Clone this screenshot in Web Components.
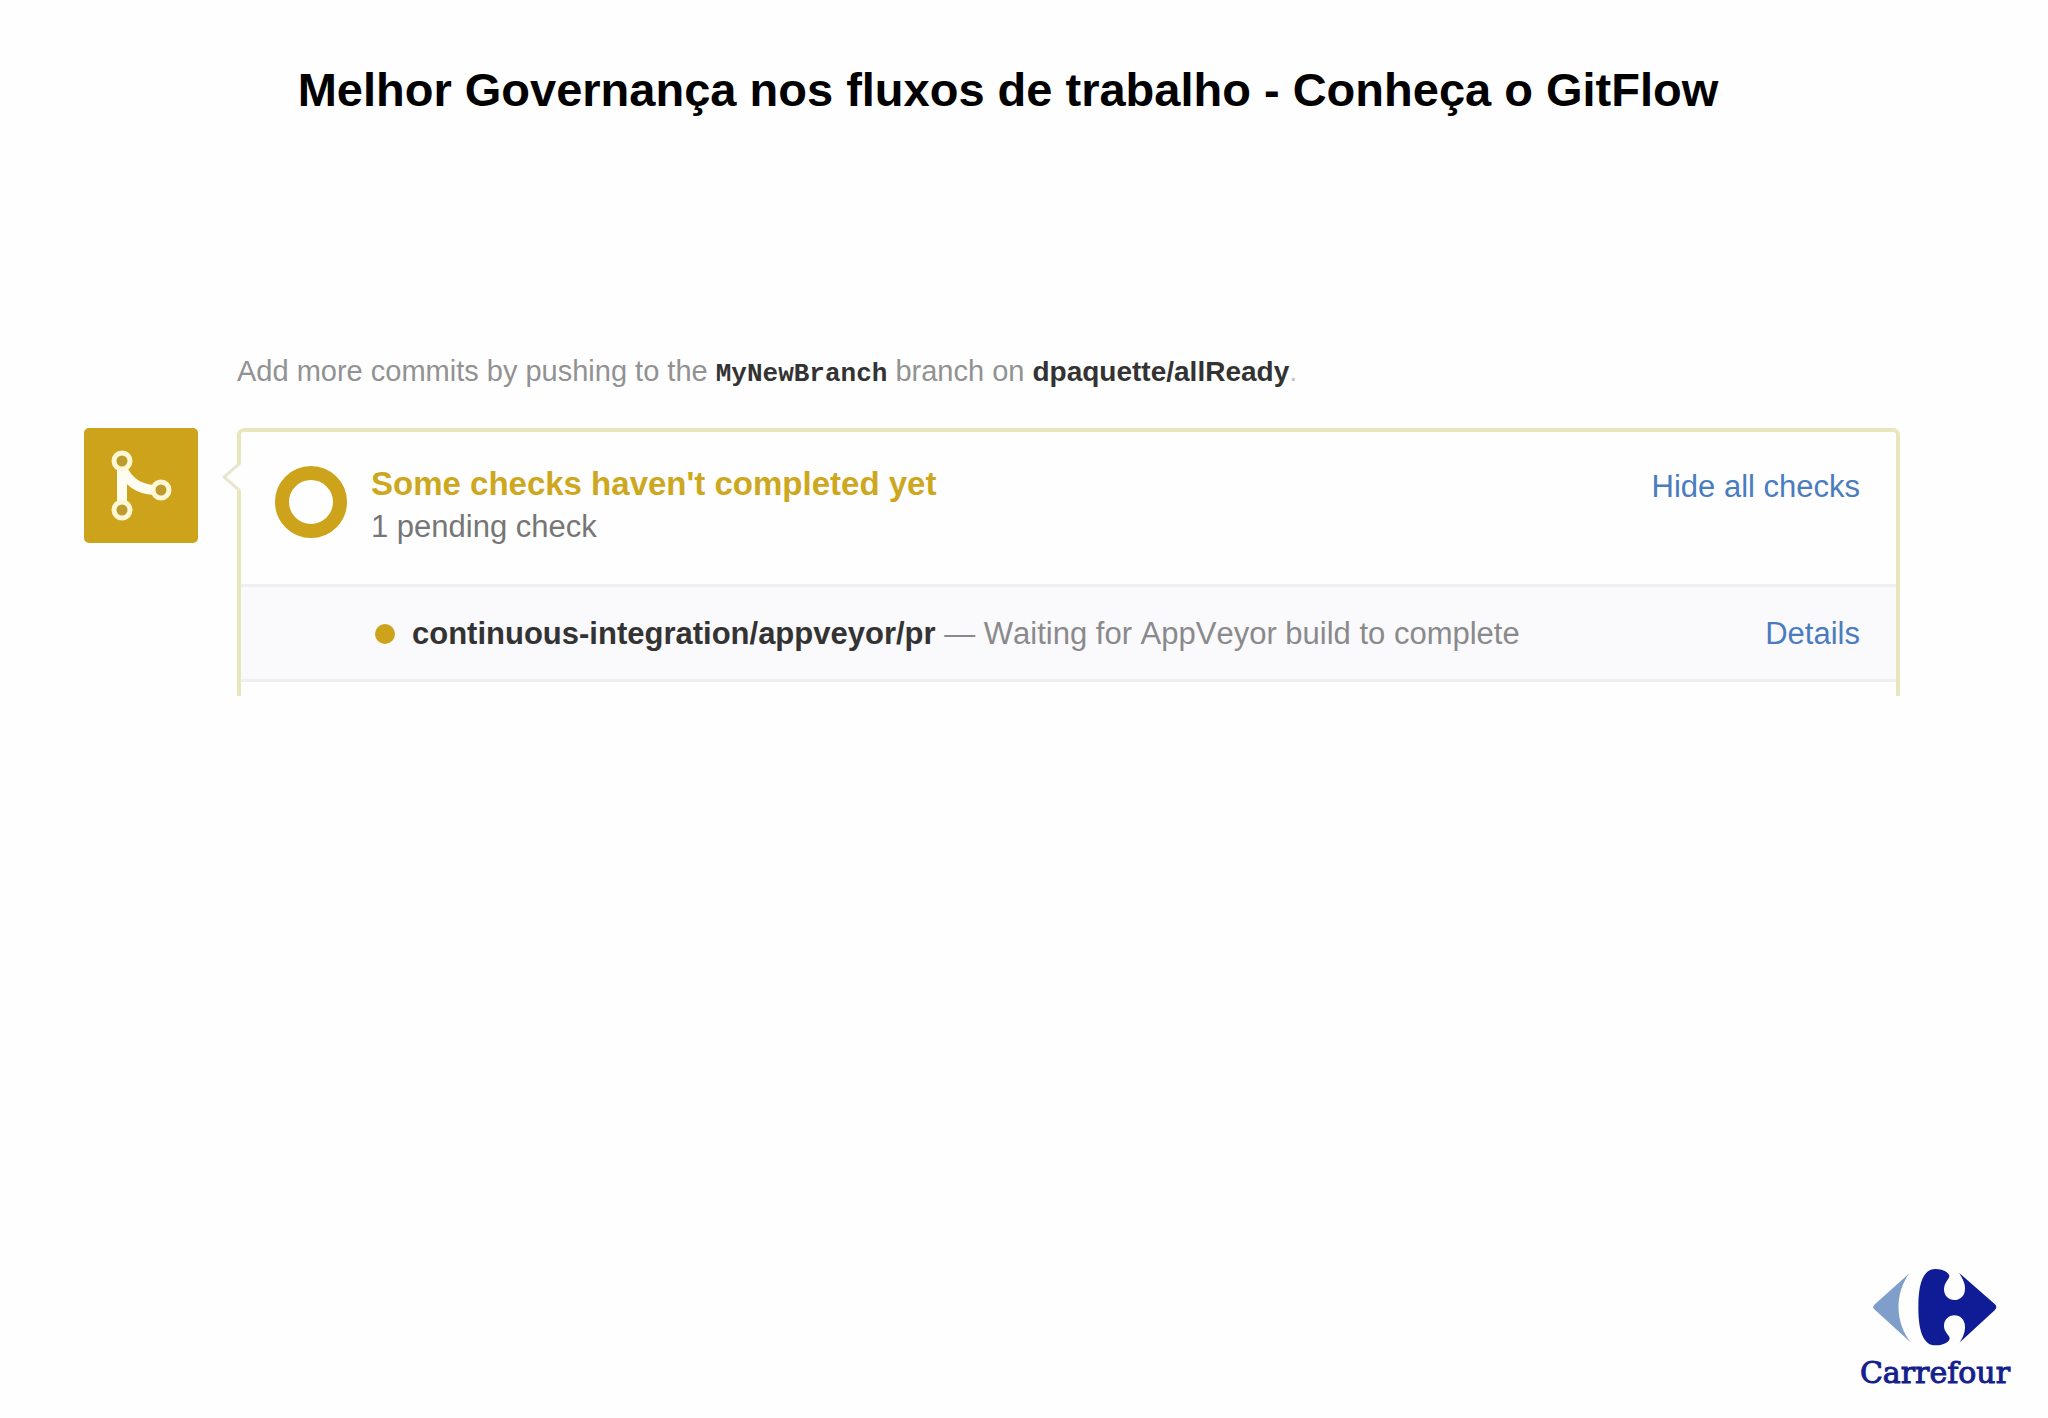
<!DOCTYPE html>
<html lang="pt-BR">
<head>
<meta charset="utf-8">
<meta name="viewport" content="width=device-width, initial-scale=1">
<title>Conheça o GitFlow</title>
<style>
html, body { margin: 0; background: #fefefe; }
body { font-family: "Liberation Sans", Arial, sans-serif; font-kerning: none; color: #767676; }
</style>
</head>
<body>
<slide-page>
  <slide-title slot="title">Melhor Governança nos fluxos de trabalho - Conheça o GitFlow</slide-title>
  <push-hint branch="MyNewBranch" repo="dpaquette/allReady"></push-hint>
  <merge-status>
    <checks-summary slot="summary" heading="Some checks haven't completed yet" detail="1 pending check"></checks-summary>
    <check-row name="continuous-integration/appveyor/pr">Waiting for AppVeyor build to complete</check-row>
  </merge-status>
  <brand-logo slot="brand">Carrefour</brand-logo>
</slide-page>
<script>
const define = (name, html) => customElements.define(name, class extends HTMLElement {
  constructor() {
    super();
    this.attachShadow({ mode: "open" }).innerHTML = html;
  }
  connectedCallback() {
    this.shadowRoot.querySelectorAll("[data-text]").forEach(el => {
      el.textContent = this.getAttribute(el.dataset.text);
    });
  }
});

define("slide-page", `
<style>
  :host { display: flex; flex-direction: column; box-sizing: border-box; min-height: 100vh; padding: 62px 38px 26px 84px; }
  main { margin: 235px 110px 48px 0; }
  footer { display: flex; justify-content: flex-end; margin-top: auto; }
</style>
<header><slot name="title"></slot></header>
<main><slot></slot></main>
<footer><slot name="brand"></slot></footer>`);

define("slide-title", `
<style>
  :host { display: block; padding-right: 78px; }
  h1 { margin: 0; font-size: 47px; line-height: 56px; font-weight: 700; text-align: center; color: #000; }
</style>
<h1><slot></slot></h1>`);

define("push-hint", `
<style>
  :host { display: block; padding-left: 153px; }
  p { margin: 0; font-size: 29px; line-height: 36px; color: #929292; }
  code { font: 700 26px/26px "Liberation Mono", monospace; color: #333; }
  strong { font-size: 28px; color: #333; }
  .end { color: #c4c4c4; }
</style>
<p>Add more commits by pushing to the <code data-text="branch"></code> branch on <strong data-text="repo"></strong><span class="end">.</span></p>`);

define("merge-status", `
<style>
  :host { display: flex; align-items: flex-start; gap: 39px; margin-top: 38px; }
  .badge { flex: none; width: 114px; height: 115px; border-radius: 5px; background: #cca31a; }
  svg { display: block; }
  .panel { flex: 1; position: relative; box-sizing: border-box; padding-bottom: 14px; border: 4px solid #e8e6bd; border-bottom: 0; border-radius: 7px 7px 0 0; background: #fefefe; }
  .caret { position: absolute; left: -20px; top: 28px; }
</style>
<div class="badge">
  <svg width="114" height="115" viewBox="0 0 114 115" fill="none" aria-hidden="true">
    <path d="M38 38V78M38 40C44 54 54 61 70 62" stroke="#fffdf2" stroke-width="10"/>
    <g fill="#bd9b2d" stroke="#fff7d6" stroke-width="5">
      <circle cx="38" cy="33" r="8"/><circle cx="38" cy="82" r="8"/><circle cx="77" cy="62" r="8"/>
    </g>
  </svg>
</div>
<div class="panel">
  <svg class="caret" width="21" height="34" viewBox="0 0 21 34" aria-hidden="true">
    <path d="M21 3L18 4L3 17L18 30L21 31Z" fill="#fefefe"/>
    <path d="M18 3V4L3 17L18 30V31" fill="none" stroke="#e8e6cf" stroke-width="3"/>
  </svg>
  <slot name="summary"></slot>
  <slot></slot>
</div>`);

define("checks-summary", `
<style>
  :host { display: flex; align-items: flex-start; gap: 24px; padding: 30px 36px 36px 34px; }
  svg { flex: none; margin-top: 4px; }
  .text { flex: 1; }
  h2 { margin: 0; font-size: 33px; line-height: 44px; color: #cda81f; }
  p { margin: 0; font-size: 31px; line-height: 42px; }
  button { margin: 4px 0 0; padding: 0; border: 0; background: none; font: inherit; font-size: 31px; line-height: 42px; color: #4a7cbf; cursor: pointer; }
</style>
<svg width="72" height="72" viewBox="0 0 72 72" aria-hidden="true"><circle cx="36" cy="36" r="29" fill="none" stroke="#cca31a" stroke-width="14"/></svg>
<div class="text"><h2 data-text="heading"></h2><p data-text="detail"></p></div>
<button type="button">Hide all checks</button>`);

define("check-row", `
<style>
  :host { display: flex; align-items: center; gap: 17px; padding: 26px 36px 24px 134px; border: solid #efeef1; border-width: 3px 0; background: #faf9fc; font-size: 31px; line-height: 42px; }
  .dot { flex: none; width: 20px; height: 20px; border-radius: 50%; background: #cca31a; }
  .text { flex: 1; color: #8a8a8c; }
  strong { color: #333; }
  a { color: #4a7cbf; text-decoration: none; }
</style>
<span class="dot"></span>
<span class="text"><strong data-text="name"></strong> — <slot></slot></span>
<a href="#details">Details</a>`);

define("brand-logo", `
<style>
  :host { display: flex; flex-direction: column; align-items: center; gap: 8px; font: 30px/38px "DejaVu Serif", serif; color: #14218c; -webkit-text-stroke: 1px #14218c; }
  svg { display: block; -webkit-text-stroke: 0; }
</style>
<svg width="126" height="78" viewBox="95 55 378 234" aria-hidden="true">
  <path d="M208 70L102 165Q95 172 102 179L212 279C164 220 162 130 208 70Z" fill="#7f9fca"/>
  <path d="M285 58C307 58 325 68 327 78C328 87 311 98 311 119C311 139 325 151 342 151C360 151 374 138 374 117C374 101 368 88 356 69L463 163Q473 172 463 182L357 279C367 264 374 250 374 231C374 211 360 197 342 197C325 197 311 210 311 229C311 248 329 258 328 267C325 279 307 287 285 287C249 287 234 245 234 172C234 100 249 58 285 58Z" fill="#101c96"/>
</svg>
<span><slot></slot></span>`);
</script>
</body>
</html>
